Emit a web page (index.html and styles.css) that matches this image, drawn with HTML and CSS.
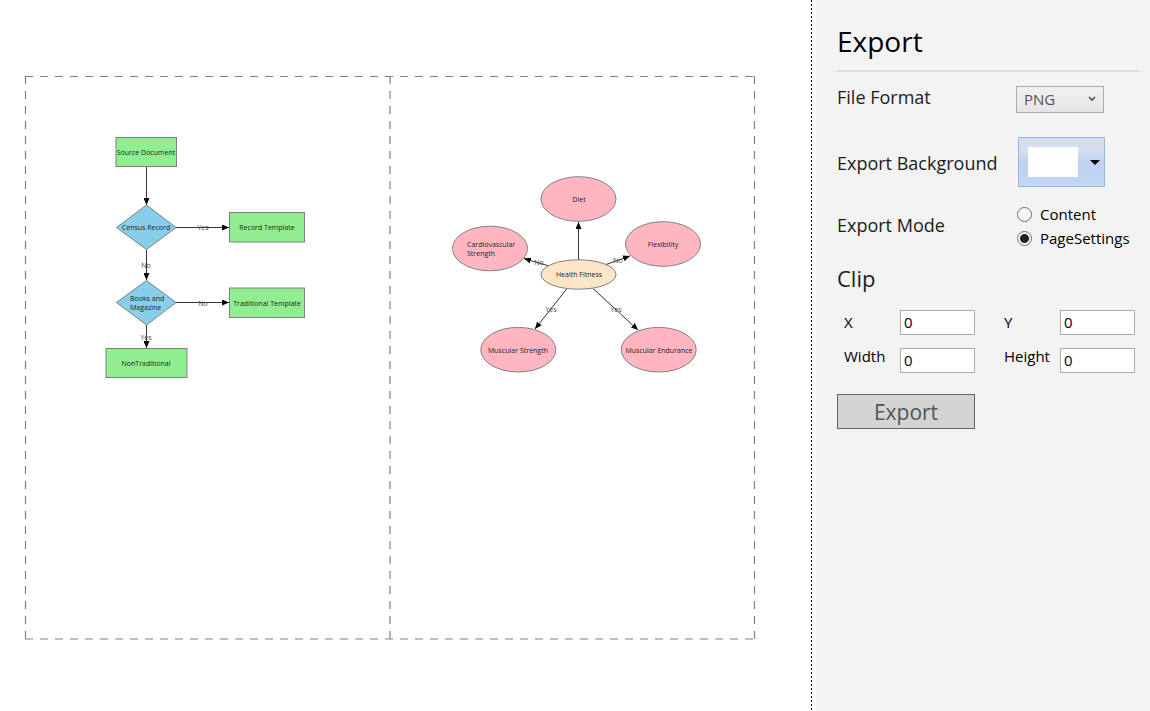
FILE: index.html
```html
<!DOCTYPE html>
<html lang="en">
<head>
<meta charset="utf-8">
<title>Export</title>
<link rel="stylesheet" href="styles.css">
</head>
<body>
<div class="app">
  <main class="canvas">
    <svg class="diagram" viewBox="0 0 811 711" role="img" aria-label="Diagram pages">
      <defs>
        <marker id="arrow" viewBox="0 0 7 6" refX="7" refY="3" markerWidth="7" markerHeight="6" markerUnits="userSpaceOnUse" orient="auto">
          <path d="M0 0L7 3L0 6Z"/>
        </marker>
      </defs>
      <g class="page-lines">
        <path d="M25 76.500H755"/>
        <path d="M25 639H755"/>
        <path d="M25.500 76V639"/>
        <path d="M390 76V639"/>
        <path d="M754.500 76V639"/>
      </g>
      <g class="links">
        <path d="M146.500 167V205"/>
        <path d="M176 227.500H229"/>
        <path d="M146.500 250V280"/>
        <path d="M176 302.500H229"/>
        <path d="M146.500 325V348"/>
        <path d="M578.500 260V222"/>
        <path d="M549 266L524 258.500"/>
        <path d="M606 264.500L630 256"/>
        <path d="M567 288.500L535 329"/>
        <path d="M593 288.500L638 330"/>
      </g>
      <g class="process">
        <rect x="116" y="137.500" width="60.500" height="29"/>
        <rect x="229.500" y="212.500" width="75" height="29.500"/>
        <rect x="229.500" y="288" width="75" height="29.500"/>
        <rect x="106" y="348.500" width="81" height="29"/>
      </g>
      <g class="decision">
        <path d="M146.500 205L176 227.500L146.500 249.500L116.500 227.500Z"/>
        <path d="M146.500 280.500L176 302.500L146.500 325L116.500 302.500Z"/>
      </g>
      <g class="topic">
        <ellipse cx="578.500" cy="199" rx="37.500" ry="22.300"/>
        <ellipse cx="490" cy="248.500" rx="37.500" ry="22.300"/>
        <ellipse cx="663" cy="244" rx="37.500" ry="22.300"/>
        <ellipse cx="518.300" cy="349.700" rx="37.500" ry="22.300"/>
        <ellipse cx="658.700" cy="349.700" rx="37.500" ry="22.300"/>
      </g>
      <ellipse class="root" cx="578.500" cy="274.500" rx="37.500" ry="14.700"/>
      <g class="labels">
        <text x="146" y="155">Source Document</text>
        <text x="146" y="230">Census Record</text>
        <text x="267" y="230">Record Template</text>
        <text class="start" x="130" y="301">Books and</text>
        <text class="start" x="130" y="310">Magazine</text>
        <text x="267" y="306">Traditional Template</text>
        <text x="146" y="366">NonTraditional</text>
        <text x="579" y="202">Diet</text>
        <text class="start" x="467" y="247">Cardiovascular</text>
        <text class="start" x="467" y="256">Strength</text>
        <text x="663" y="247">Flexibility</text>
        <text x="579" y="277">Health Fitness</text>
        <text x="518" y="353">Muscular Strength</text>
        <text x="659" y="353">Muscular Endurance</text>
      </g>
      <g class="labels link-labels">
        <text x="203" y="230">Yes</text>
        <text x="146" y="268">No</text>
        <text x="203" y="306">No</text>
        <text x="146" y="340">Yes</text>
        <text x="539" y="265">No</text>
        <text x="618" y="263">No</text>
        <text x="551" y="312">Yes</text>
        <text x="616" y="312">Yes</text>
      </g>
    </svg>
  </main>
  <div class="splitter"></div>
  <form class="panel">
    <h1 class="title">Export</h1>
    <div class="options">
      <label class="name name-format" for="format">File Format</label>
      <div class="select-wrap">
        <select class="select" id="format"><option>PNG</option></select>
        <svg class="chevron" viewBox="0 0 8 6" aria-hidden="true"><path d="M1 1L4 4L7 1"/></svg>
      </div>
      <span class="name name-color" id="color-label">Export Background</span>
      <button class="color" type="button" aria-labelledby="color-label">
        <span class="swatch"></span>
        <svg class="caret" viewBox="0 0 10 5" aria-hidden="true"><path d="M0 0H10L5 5Z"/></svg>
      </button>
      <span class="name name-mode" id="mode-label">Export Mode</span>
      <div class="modes" role="radiogroup" aria-labelledby="mode-label">
        <label class="mode"><input class="radio" type="radio" name="mode">Content</label>
        <label class="mode"><input class="radio" type="radio" name="mode" checked>PageSettings</label>
      </div>
    </div>
    <h2 class="subtitle">Clip</h2>
    <div class="clip">
      <label class="clip-name" for="x">X</label><input class="box" id="x" type="text" value="0">
      <label class="clip-name clip-second" for="y">Y</label><input class="box" id="y" type="text" value="0">
      <label class="clip-name clip-size" for="w">Width</label><input class="box" id="w" type="text" value="0">
      <label class="clip-name clip-second clip-size" for="h">Height</label><input class="box" id="h" type="text" value="0">
    </div>
    <button class="export" type="button">Export</button>
  </form>
</div>
</body>
</html>
```
FILE: styles.css
```css
* { box-sizing: border-box; }
body {
  margin: 0;
  background: #fff;
  color: #1b1b1b;
  font-family: "Open Sans", "Noto Sans", sans-serif;
}
.app { display: flex; min-height: 100vh; }
.canvas { flex: 1; min-width: 0; }
.diagram { display: block; width: 100%; height: auto; }
.page-lines { fill: none; stroke: #808080; stroke-width: 1.2; stroke-dasharray: 8 7; }
.links { fill: none; stroke: #333; stroke-width: 1; }
.links path { marker-end: url(#arrow); }
.process { fill: #90ee90; stroke: #808080; stroke-width: 1; }
.decision { fill: #87ceeb; stroke: #808080; stroke-width: 1; }
.topic { fill: #ffb6c1; stroke: #808080; stroke-width: 1; }
.root { fill: #fde6c8; stroke: #808080; stroke-width: 1; }
.labels { font-size: 7px; text-anchor: middle; fill: #222; }
.labels .start { text-anchor: start; }
.link-labels { fill: #444; }

.splitter {
  width: 5px;
  background:
    repeating-linear-gradient(#111 0 2px, #fff 2px 4px) left / 1px 100% no-repeat;
}
.panel {
  width: 334px;
  padding: 20px 11px 20px 21px;
  background: #f3f3f3;
}
.title {
  margin: 0;
  height: 52px;
  border-bottom: 2px solid #dedede;
  color: #000;
  font-size: 28px;
  font-weight: 400;
  line-height: 42px;
}
.options {
  display: grid;
  grid-template-columns: 180px 1fr;
  grid-template-rows: 65px 62px auto;
}
.name { font-size: 18px; line-height: 24px; }
.name-format { padding-top: 13px; }
.name-color { padding-top: 14px; }
.name-mode { padding-top: 14px; }
.select-wrap { position: relative; width: 88px; margin: 14px 0 0 -1px; }
.select {
  appearance: none;
  display: block;
  width: 100%;
  height: 27px;
  padding: 0 7px 2px;
  border: 1px solid #acacac;
  border-radius: 0;
  background: linear-gradient(#f0f0f0, #e5e5e5);
  color: #555;
  font: 15px "Open Sans", "Noto Sans", sans-serif;
}
.chevron {
  position: absolute;
  top: 10px;
  right: 8px;
  width: 8px;
  height: 6px;
  fill: none;
  stroke: #555;
  stroke-width: 1.6;
  pointer-events: none;
}
.color {
  display: flex;
  align-items: center;
  justify-content: space-between;
  width: 87px;
  height: 50px;
  margin: 0 0 0 1px;
  padding: 0 4px 0 9px;
  border: 1px solid #98b6e0;
  background: linear-gradient(#d4e0ef 0 25%, #bcd2ee 50%, #c0d6f5);
}
.swatch { width: 50px; height: 30px; background: #fff; }
.caret { width: 10px; height: 5px; }
.modes { padding-top: 3px; }
.mode { display: flex; align-items: center; gap: 8px; height: 24px; color: #000; font-size: 15px; line-height: 24px; }
.radio {
  appearance: none;
  width: 15px;
  height: 15px;
  margin: 0;
  border: 1px solid #707070;
  border-radius: 50%;
  background: #f6f6f6;
}
.radio:checked { background: radial-gradient(circle, #212121 4px, #f6f6f6 5px); }
.subtitle { margin: 11px 0 15px; font-size: 22px; font-weight: 400; line-height: 34px; }
.clip {
  display: grid;
  grid-template-columns: 57px 75px 73px 75px;
  column-gap: 6px;
  row-gap: 13px;
}
.clip-name { padding-left: 7px; color: #000; font-size: 15px; line-height: 24px; }
.clip-second { padding-left: 23px; }
.clip-size { line-height: 16px; }
.box {
  width: 75px;
  height: 25px;
  padding: 0 3px 2px;
  border: 1px solid #abadb3;
  background: #fff;
  color: #000;
  font: 15px "Open Sans", "Noto Sans", sans-serif;
}
.export {
  display: block;
  width: 138px;
  height: 35px;
  margin-top: 21px;
  padding: 0;
  border: 1px solid #666;
  background: #d3d3d3;
  color: #555;
  font: 21px/32px "Open Sans", "Noto Sans", sans-serif;
}
```
